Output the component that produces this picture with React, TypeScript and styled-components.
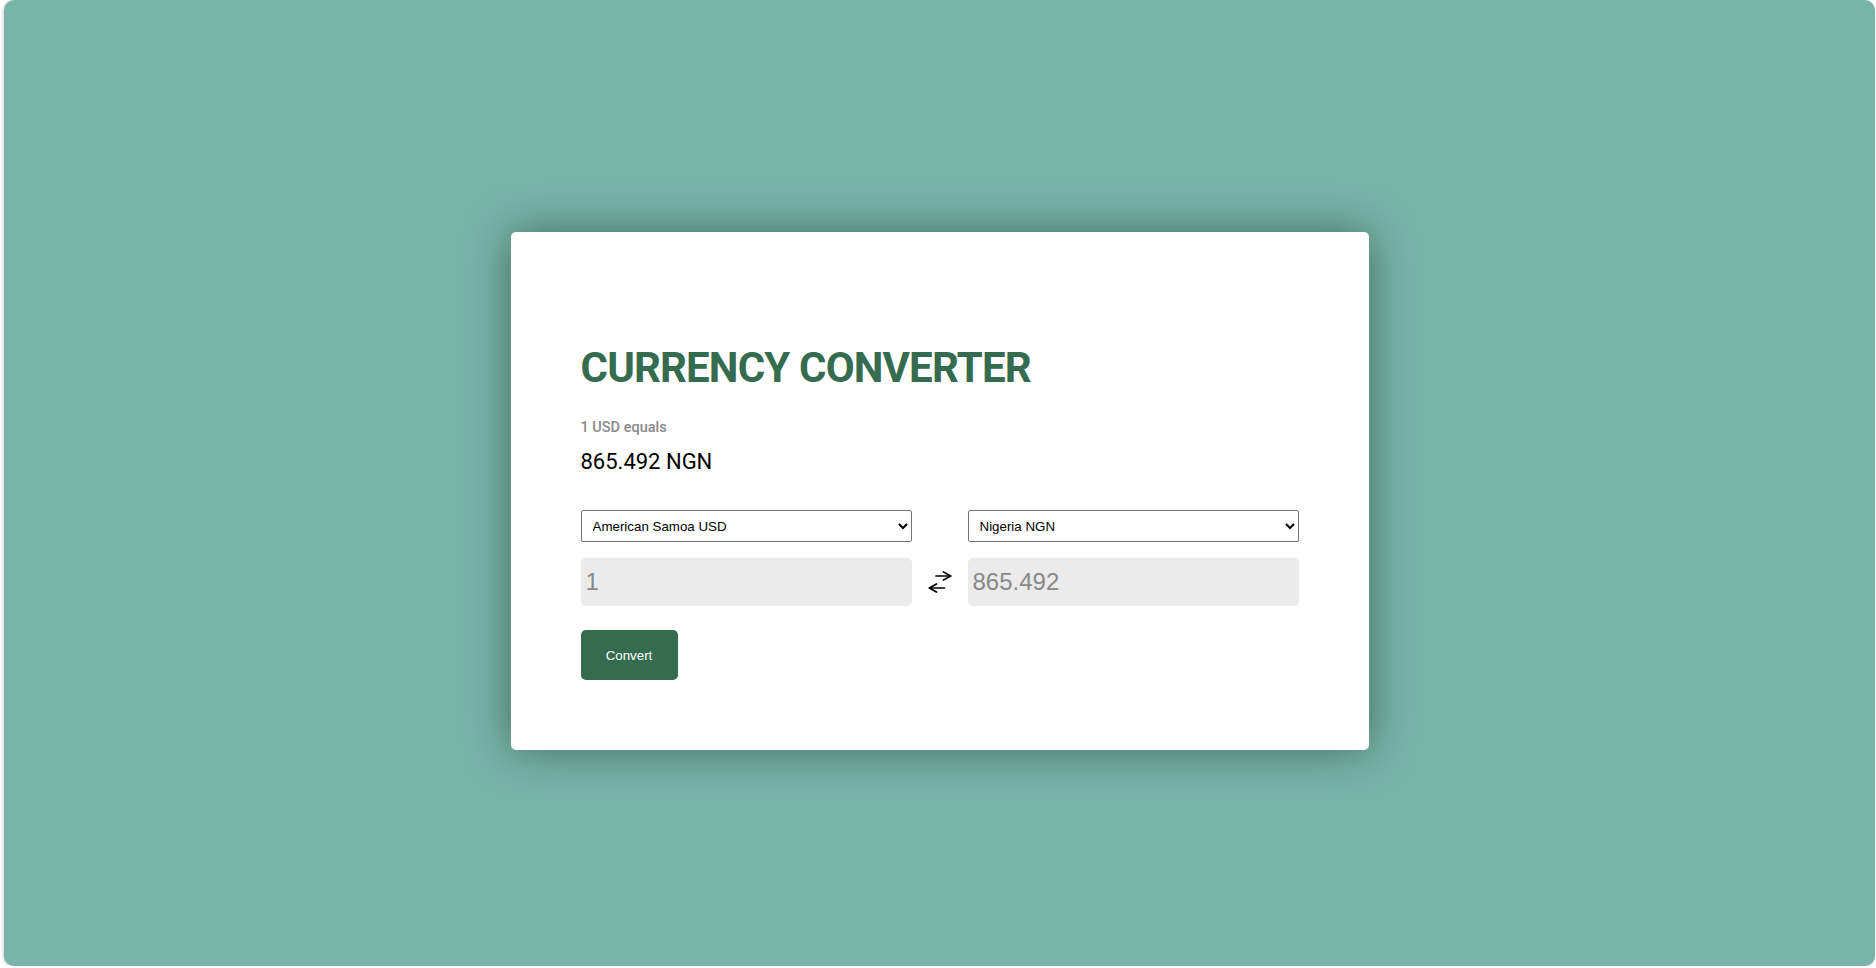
import React, { useState } from "react";
import styled, { createGlobalStyle } from "styled-components";

const Global = createGlobalStyle`
  html, body { margin: 0; padding: 0; background: #ffffff; }
  body { font-family: Roboto, "Liberation Sans", Arial, sans-serif; }
  * { box-sizing: border-box; }
`;

const Backdrop = styled.main`
  margin: 0 1px 0 4px;
  height: 966px;
  border-radius: 10px;
  background: #79b4a9;
  box-shadow: -1px 1px 3px rgba(0, 0, 0, 0.18);
  display: flex;
  align-items: center;
  justify-content: center;
  padding-top: 16px;
`;

const Card = styled.section`
  width: 858px;
  height: 518px;
  background: #ffffff;
  border-radius: 5px;
  box-shadow: 0 0 45px rgba(20, 50, 40, 0.55);
  padding: 70px;
  display: flex;
  flex-direction: column;
`;

const Title = styled.h1`
  margin: 41px 0 0;
  font-family: Roboto, "Liberation Sans", sans-serif;
  font-weight: 700;
  font-size: 42px;
  line-height: 49px;
  color: #356b4f;
  letter-spacing: -0.85px;
`;

const RateLabel = styled.p`
  margin: 28px 0 0;
  font-family: Roboto, "Liberation Sans", sans-serif;
  font-weight: 500;
  font-size: 14.5px;
  line-height: 16px;
  color: #8a8a8a;
`;

const RateValue = styled.p`
  margin: 13px 0 0;
  font-family: Roboto, "Liberation Sans", sans-serif;
  font-weight: 400;
  font-size: 22px;
  line-height: 26px;
  color: #000000;
`;

const Converter = styled.div`
  margin-top: 35px;
  display: grid;
  grid-template-columns: 331px 56px 331px;
  grid-template-rows: 32px 48px;
  row-gap: 16px;
`;

const CurrencySelect = styled.select<{ $col: number }>`
  grid-column: ${(p) => p.$col};
  grid-row: 1;
  width: 331px;
  height: 32px;
  border: 1px solid #767676;
  border-radius: 2px;
  background: #ffffff;
  padding: 0 6px 0 7px;
  font-family: "Liberation Sans", Arial, sans-serif;
  font-size: 13.33px;
  color: #000000;
`;

const Amount = styled.input<{ $col: number }>`
  grid-column: ${(p) => p.$col};
  grid-row: 2;
  width: 331px;
  height: 48px;
  border: none;
  outline: none;
  border-radius: 5px;
  background: #ebebeb;
  padding: 0 5px;
  font-family: "Liberation Sans", Arial, sans-serif;
  font-size: 24px;
  color: #888888;
`;

const SwapCell = styled.button`
  grid-column: 2;
  grid-row: 2;
  border: none;
  background: transparent;
  padding: 0;
  display: flex;
  align-items: center;
  justify-content: center;
  cursor: pointer;
`;

const ConvertButton = styled.button`
  margin-top: 24px;
  width: 97px;
  height: 50px;
  border: none;
  border-radius: 5px;
  background: #356b4f;
  color: #ffffff;
  font-family: "Liberation Sans", Arial, sans-serif;
  font-size: 13.33px;
  font-weight: 500;
  padding: 1px 0 0;
  cursor: pointer;
`;

const SwapIcon = () => (
  <svg width="24" height="24" viewBox="0 0 24 24" fill="none" stroke="#000" strokeWidth="1.7" strokeLinecap="round" strokeLinejoin="round">
    <path d="M8 6H22.5" />
    <path d="M15.5 2L22.7 6L15.5 10" />
    <path d="M1.5 18H16.5" />
    <path d="M8.5 14L1.3 18L8.5 22" />
  </svg>
);

const countries = [
  "Afghanistan AFN",
  "Albania ALL",
  "Algeria DZD",
  "American Samoa USD",
  "Nigeria NGN",
  "United Kingdom GBP",
];

export default function App() {
  const [from, setFrom] = useState("American Samoa USD");
  const [to, setTo] = useState("Nigeria NGN");
  const [amount, setAmount] = useState("1");
  return (
    <>
      <Global />
      <Backdrop>
        <Card>
          <Title>CURRENCY CONVERTER</Title>
          <RateLabel>1 USD equals</RateLabel>
          <RateValue>865.492 NGN</RateValue>
          <Converter>
            <CurrencySelect $col={1} value={from} onChange={(e) => setFrom(e.target.value)}>
              {countries.map((c) => (
                <option key={c}>{c}</option>
              ))}
            </CurrencySelect>
            <CurrencySelect $col={3} value={to} onChange={(e) => setTo(e.target.value)}>
              {countries.map((c) => (
                <option key={c}>{c}</option>
              ))}
            </CurrencySelect>
            <Amount $col={1} value={amount} onChange={(e) => setAmount(e.target.value)} />
            <SwapCell aria-label="swap">
              <SwapIcon />
            </SwapCell>
            <Amount $col={3} value="865.492" readOnly />
          </Converter>
          <ConvertButton>Convert</ConvertButton>
        </Card>
      </Backdrop>
    </>
  );
}
